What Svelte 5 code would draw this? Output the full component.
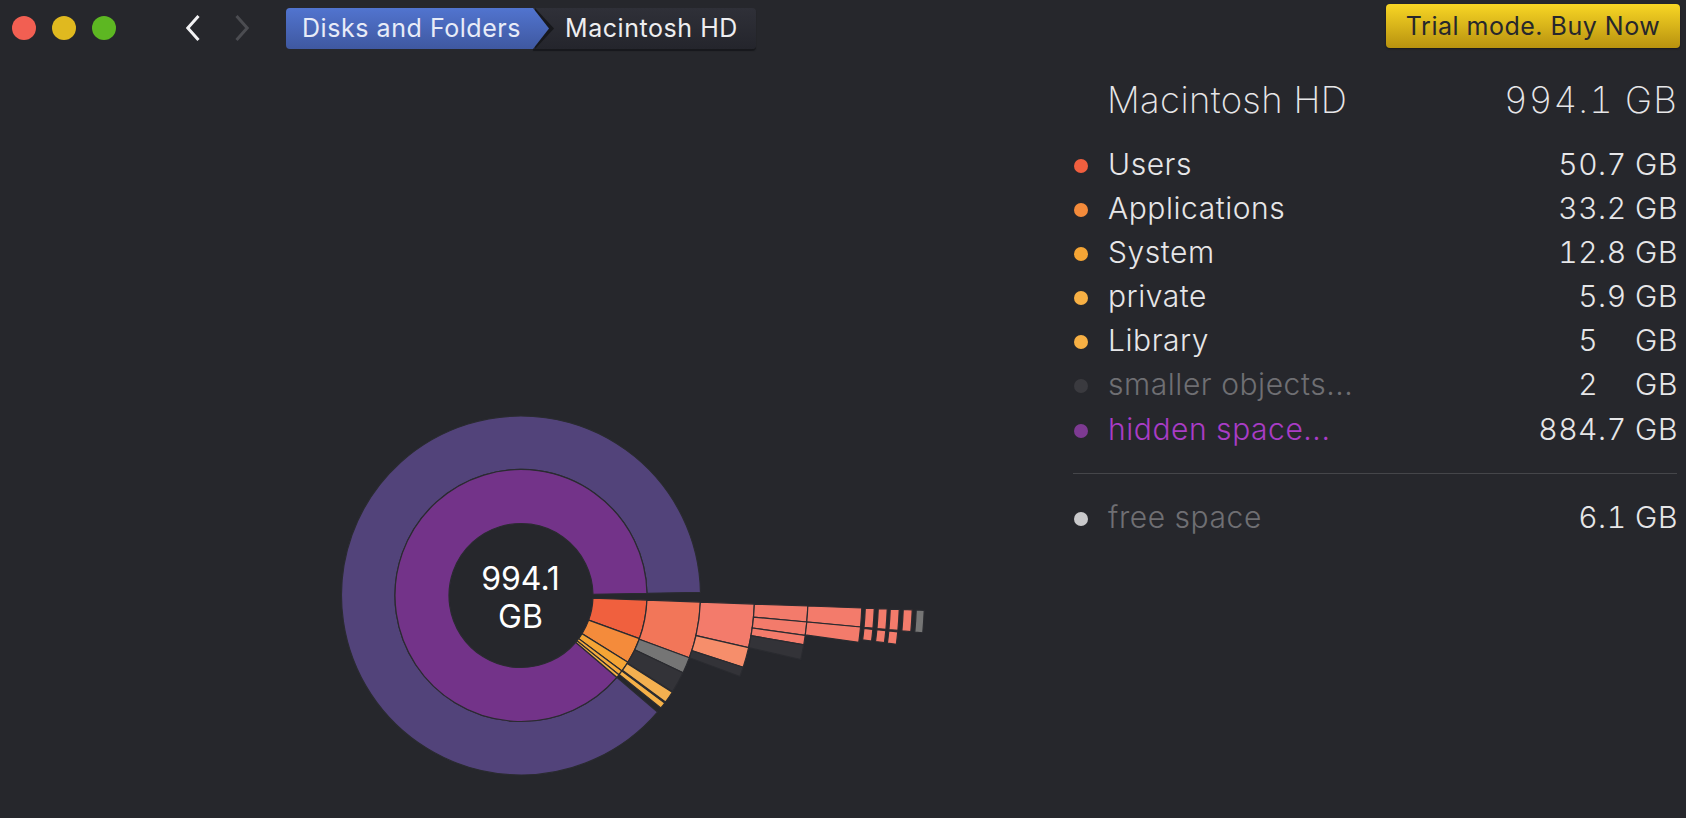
<script>
  const cx = 521, cy = 539.5;
  const pt = (r, a) => {
    const t = (a * Math.PI) / 180;
    return `${(cx + r * Math.cos(t)).toFixed(2)} ${(cy + r * Math.sin(t)).toFixed(2)}`;
  };
  const arc = (r0, r1, a0, a1) => {
    const big = a1 - a0 > 180 ? 1 : 0;
    return `M${pt(r0, a0)}A${r0} ${r0} 0 ${big} 1 ${pt(r0, a1)}L${pt(r1, a1)}A${r1} ${r1} 0 ${big} 0 ${pt(r1, a0)}Z`;
  };
  const salmon = '#f37b6b';
  const segments = [
    [126, 179.5, 40.5, 359, '#52437a'],
    [72, 126, 40.5, 359, '#733389'],
    [72, 126, 2.1, 20, '#f0603e'],
    [72, 126, 20, 32, '#f48b3b'],
    [72, 126, 32, 36.8, '#f5a535'],
    [72, 126, 36.8, 39, '#f6ab3c'],
    [72, 126, 39, 40.5, '#f7b044'],
    [126, 179.5, 2.1, 20.3, '#f27659'],
    [126, 179.5, 20.3, 25.5, '#757575'],
    [126, 179.5, 25.5, 32.4, '#333338'],
    [126, 179.5, 32.6, 36.4, '#f4b050'],
    [126, 179.5, 36.8, 38.8, '#f6b148'],
    [179.5, 233.5, 2.1, 12.9, salmon],
    [179.5, 233.5, 12.9, 17.9, '#f68e6b'],
    [179.5, 233.5, 17.9, 20.3, '#333338'],
    [233.5, 287, 2.1, 5.3, salmon],
    [233.5, 287, 5.3, 8, salmon],
    [233.5, 287, 8, 9.9, salmon],
    [233.5, 287, 9.9, 12.9, '#333338'],
    [287, 341, 2.1, 5.3, salmon],
    [287, 341, 5.3, 7.9, salmon],
    [344.5, 353.5, 2.1, 5.3, salmon],
    [344.5, 353.5, 5.5, 7.4, salmon],
    [357.5, 366.5, 2.1, 5.3, salmon],
    [357.5, 366.5, 5.5, 7.4, salmon],
    [369.5, 378.5, 2.1, 5.3, salmon],
    [369.5, 378.5, 5.5, 7.4, salmon],
    [382.5, 391.5, 2.1, 5.3, salmon],
    [395.5, 403.5, 2.1, 5.3, '#757575']
  ];
  const rows = [
    { name: 'Users', int: '50', frac: '.7', color: '#f15f3f' },
    { name: 'Applications', int: '33', frac: '.2', color: '#f48b3b' },
    { name: 'System', int: '12', frac: '.8', color: '#f5a535' },
    { name: 'private', int: '5', frac: '.9', color: '#f7b044' },
    { name: 'Library', int: '5', frac: '', color: '#f7b044' },
    { name: 'smaller objects...', int: '2', frac: '', color: '#3a3a3f', kind: 'muted' },
    { name: 'hidden space...', int: '884', frac: '.7', color: '#7d3a92', kind: 'hidden' }
  ];
</script>

<div class="window">
  <header class="toolbar">
    <div class="lights">
      <span class="light red"></span>
      <span class="light yellow"></span>
      <span class="light green"></span>
    </div>
    <div class="nav">
      <svg width="14" height="26" viewBox="0 0 14 26"><path d="M12.5 1 1.8 13l10.7 12" class="chev" /></svg>
      <svg width="14" height="26" viewBox="0 0 14 26"><path d="M1.5 1 12.2 13 1.5 25" class="chev off" /></svg>
    </div>
    <nav class="crumbs">
      <span class="crumb first">Disks and Folders</span>
      <span class="crumb second">Macintosh HD</span>
    </nav>
    <button class="buy">Trial mode. Buy Now</button>
  </header>

  <main class="content">
    <svg class="chart" width="1073" height="762" viewBox="0 0 1073 762">
      {#each segments as s}
        <path d={arc(s[0], s[1], s[2], s[3])} fill={s[4]} stroke="#2a2b30" stroke-width="1.2" />
      {/each}
      <text x={cx - 0.5} y="534" class="center">994.1</text>
      <text x={cx - 0.5} y="572" class="center">GB</text>
    </svg>

    <section class="panel">
      <div class="title">
        <span class="drive">Macintosh HD</span>
        <span class="total">994.1 GB</span>
      </div>
      <ul class="list">
        {#each rows as r}
          <li class="row {r.kind ?? ''}">
            <span class="dot" style="background:{r.color}"></span>
            <span class="name">{r.name}</span>
            <span class="value"><span class="int">{r.int}</span><span class="frac">{r.frac}</span><span class="unit">GB</span></span>
          </li>
        {/each}
      </ul>
      <hr />
      <div class="row muted free">
        <span class="dot" style="background:#c9c9cb"></span>
        <span class="name">free space</span>
        <span class="value"><span class="int">6</span><span class="frac">.1</span><span class="unit">GB</span></span>
      </div>
    </section>
  </main>
</div>

<style>
  :global(body) {
    margin: 0;
    background: #26272c;
  }
  .window {
    width: 1686px;
    height: 818px;
    overflow: hidden;
    background: #26272c;
    font-family: Inter, "Liberation Sans", sans-serif;
    color: #e6e6e8;
  }
  .toolbar {
    height: 56px;
    display: flex;
    align-items: flex-start;
    box-sizing: border-box;
    padding: 4px 6px 0 12px;
  }
  .lights {
    display: flex;
    gap: 16px;
    margin-top: 12px;
  }
  .light {
    width: 24px;
    height: 24px;
    border-radius: 50%;
  }
  .red { background: #f25f52; }
  .yellow { background: #e0b91f; }
  .green { background: #5db722; }
  .nav {
    display: flex;
    gap: 35px;
    margin: 11px 0 0 70px;
  }
  .chev {
    fill: none;
    stroke: #f2f2f4;
    stroke-width: 3;
  }
  .chev.off { stroke: #4b4c51; }
  .crumbs {
    display: flex;
    margin: 4px 0 0 37px;
    font-size: 25px;
    letter-spacing: 0.55px;
  }
  .crumb {
    height: 41px;
    line-height: 40px;
    position: relative;
    box-sizing: border-box;
  }
  .first {
    width: 247px;
    padding-left: 16px;
    color: #e8ecf8;
    background: linear-gradient(#5174cf, #3f58a0);
    border-radius: 4px 0 0 4px;
    z-index: 1;
  }
  .first::before,
  .first::after {
    content: "";
    position: absolute;
    top: 0;
    height: 41px;
    clip-path: polygon(0 0, 100% 50%, 0 100%);
  }
  .first::before {
    left: 100%;
    width: 19px;
    background: #17181c;
    margin-left: 2px;
  }
  .first::after {
    left: 100%;
    width: 16px;
    background: linear-gradient(#5174cf, #3f58a0);
  }
  .second {
    width: 223px;
    padding-left: 32px;
    color: #eeeef0;
    background: linear-gradient(#2f3038, #24252c);
    border-radius: 0 4px 4px 0;
    box-shadow: 0 2px 1px #17181c;
  }
  .buy {
    margin-left: auto;
    width: 294px;
    height: 44px;
    padding: 0;
    border: 0;
    border-radius: 4px;
    background: linear-gradient(#f8d625, #b8920f);
    box-shadow: 0 1px 2px #17181c;
    color: #26272c;
    font: 25px Inter, "Liberation Sans", sans-serif;
    letter-spacing: 0.5px;
  }
  .content {
    display: flex;
    height: 762px;
  }
  .chart {
    flex: none;
    display: block;
  }
  .center {
    fill: #fff;
    font-size: 32px;
    text-anchor: middle;
  }
  .panel {
    width: 604px;
    padding-top: 20px;
  }
  .title {
    display: flex;
    justify-content: space-between;
    padding-left: 34px;
    height: 48px;
    align-items: center;
    font-size: 36.5px;
    font-weight: 250;
  }
  .drive {
    letter-spacing: 0.35px;
  }
  .total {
    font-variant-numeric: tabular-nums;
    letter-spacing: 1.2px;
    margin-right: -1px;
  }
  .list {
    list-style: none;
    margin: 18px 0 0;
    padding: 0;
  }
  .row {
    display: flex;
    align-items: center;
    height: 44.08px;
    font-size: 30px;
    font-weight: 300;
    letter-spacing: 0.55px;
  }
  .dot {
    width: 14px;
    height: 14px;
    border-radius: 50%;
    margin: 4px 20px 0 1px;
    flex: none;
  }
  .name { flex: 1; }
  .value {
    display: flex;
    font-variant-numeric: tabular-nums;
    margin-right: -1px;
  }
  .frac {
    width: 31px;
  }
  .unit {
    margin-left: 6px;
  }
  .muted .name { color: #6f6f73; }
  .hidden .name { color: #a93cc6; }
  hr {
    border: 0;
    height: 1px;
    background: #45464a;
    margin: 22px 0 0;
  }
  .free {
    margin-top: 21px;
  }
</style>
